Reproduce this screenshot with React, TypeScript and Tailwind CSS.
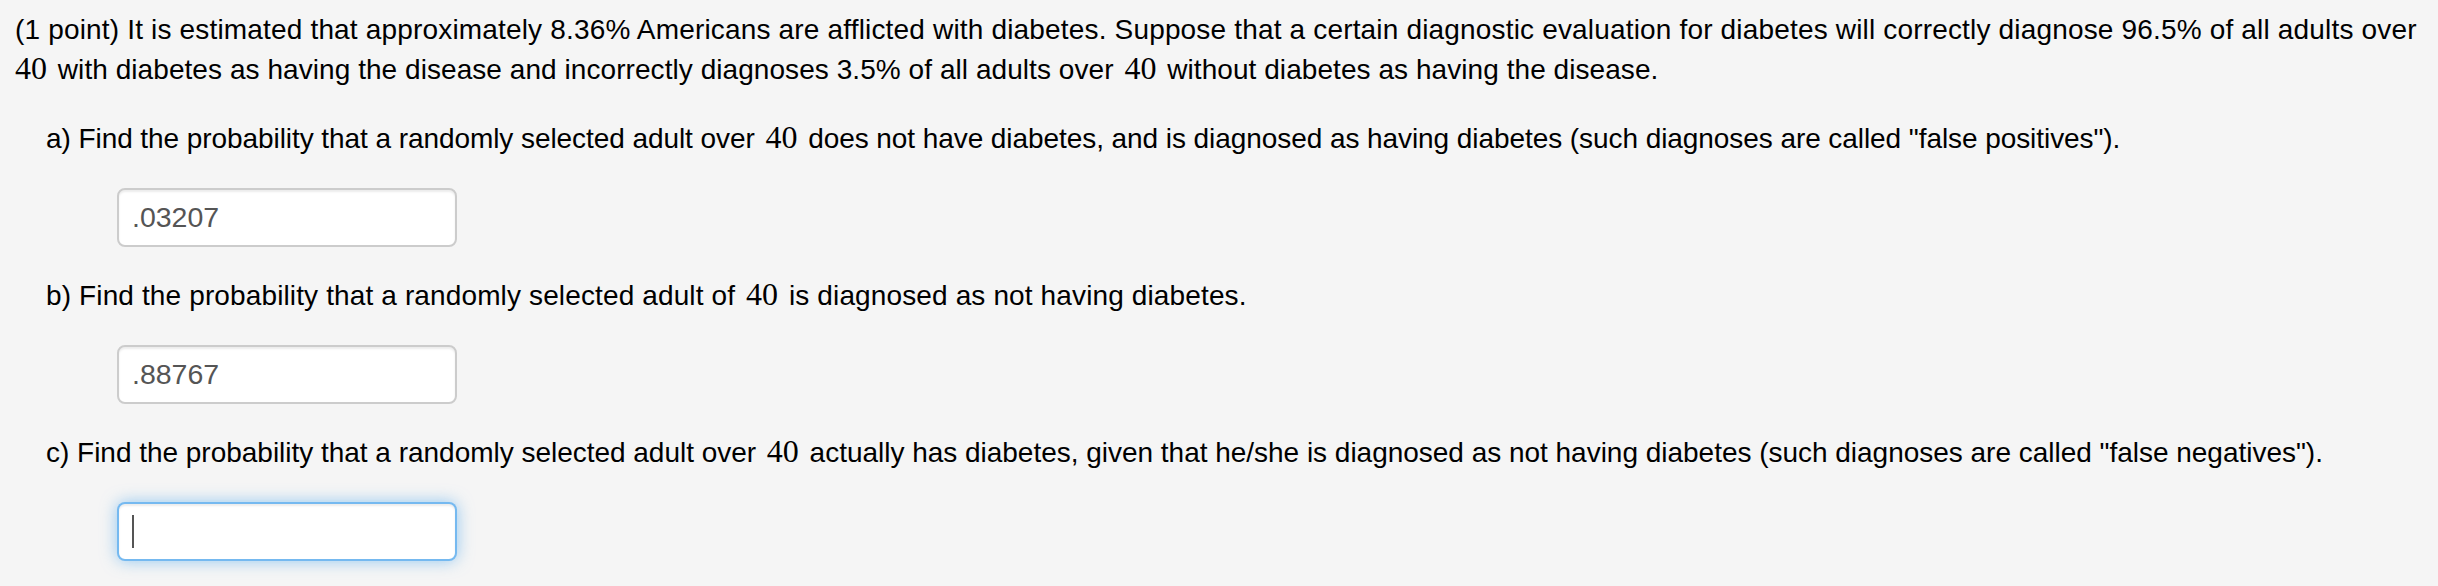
import React from "react";

function M({ children, first }: { children: React.ReactNode; first?: boolean }) {
  return (
    <span
      className={
        first
          ? "mr-[3px] font-['Liberation_Serif',serif] text-[32px] leading-none tracking-normal"
          : "mx-[3px] font-['Liberation_Serif',serif] text-[32px] leading-none tracking-normal"
      }
    >
      {children}
    </span>
  );
}

function Answer({ value, focused }: { value?: string; focused?: boolean }) {
  if (focused) {
    return (
      <div className="ml-[71px] mt-[29px] flex h-[59px] w-[340px] items-center rounded-[8px] border-2 border-[rgba(82,168,236,0.8)] bg-white pl-[13px] shadow-[inset_0_2px_2px_rgba(0,0,0,0.075),0_0_16px_rgba(82,168,236,0.6)]">
        <span className="block h-[33px] w-[2px] bg-[#555]" />
      </div>
    );
  }
  return (
    <input
      readOnly
      value={value}
      className="ml-[71px] mt-[29px] block h-[59px] w-[340px] rounded-[8px] border-2 border-[#cccccc] bg-white px-[13px] text-[28.5px] text-[#555555] shadow-[inset_0_2px_2px_rgba(0,0,0,0.075)] outline-none font-['Liberation_Sans',Arial,sans-serif]"
    />
  );
}

export default function App() {
  return (
    <div className="min-h-[586px] w-full bg-[#f5f5f5] pl-[15px] pr-[10px] pt-[10px] text-[28px] leading-[40px] text-black font-['Liberation_Sans',Arial,sans-serif]">
      <p>
        <span className="block whitespace-nowrap tracking-[0.17px]">
          (1 point) It is estimated that approximately 8.36% Americans are afflicted with diabetes. Suppose that a
          certain diagnostic evaluation for diabetes will correctly diagnose 96.5% of all adults over
        </span>
        <span className="block whitespace-nowrap tracking-[0.06px]">
          <M first>40</M> with diabetes as having the disease and incorrectly diagnoses 3.5% of all adults over{" "}
          <M>40</M> without diabetes as having the disease.
        </span>
      </p>

      <div className="ml-[31px]">
        <div className="mt-[29px] tracking-[-0.07px]">
          a) Find the probability that a randomly selected adult over <M>40</M> does not have diabetes, and is diagnosed
          as having diabetes (such diagnoses are called "false positives").
        </div>
        <Answer value=".03207" />

        <div className="mt-[29px] tracking-[0.13px]">
          b) Find the probability that a randomly selected adult of <M>40</M> is diagnosed as not having diabetes.
        </div>
        <Answer value=".88767" />

        <div className="mt-[29px] tracking-[-0.02px]">
          c) Find the probability that a randomly selected adult over <M>40</M> actually has diabetes, given that he/she
          is diagnosed as not having diabetes (such diagnoses are called "false negatives").
        </div>
        <Answer focused />
      </div>
    </div>
  );
}
